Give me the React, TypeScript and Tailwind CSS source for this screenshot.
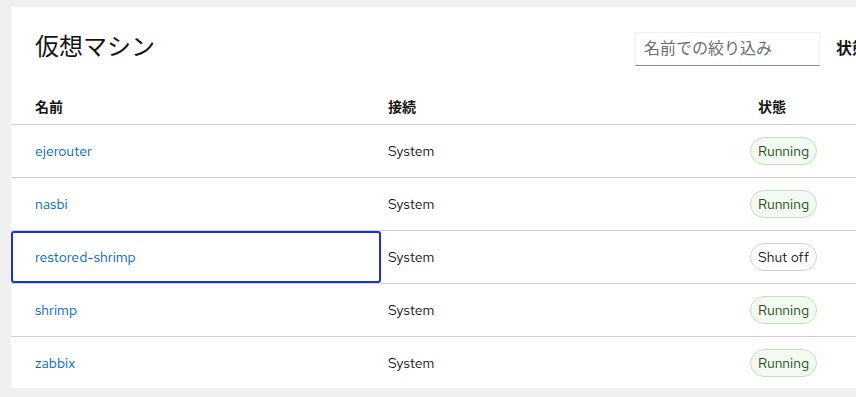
import React from 'react';

type Vm = { name: string; conn: string; state: 'Running' | 'Shut off'; focused?: boolean };

const vms: Vm[] = [
  { name: 'ejerouter', conn: 'System', state: 'Running' },
  { name: 'nasbi', conn: 'System', state: 'Running' },
  { name: 'restored-shrimp', conn: 'System', state: 'Shut off', focused: true },
  { name: 'shrimp', conn: 'System', state: 'Running' },
  { name: 'zabbix', conn: 'System', state: 'Running' },
];

const font = { fontFamily: '"Red Hat Text", Inter, "Noto Sans CJK JP", sans-serif' };

const StateBadge = ({ state }: { state: Vm['state'] }) =>
  state === 'Running' ? (
    <span className="inline-flex h-[28px] items-center rounded-full border border-[#bde5b8] bg-[#f3faf2] px-[7px] text-sm text-[#1e4f18]">
      Running
    </span>
  ) : (
    <span className="inline-flex h-[28px] items-center rounded-full border border-[#d2d2d2] bg-white px-[7px] text-sm text-[#151515]">
      Shut off
    </span>
  );

export default function App() {
  return (
    <div className="h-[397px] w-[856px] overflow-hidden bg-[#f0f0f0] pl-[11px] pt-[7px]" style={font}>
      <div className="w-[1000px] bg-white">
        <div className="flex h-[83px] items-center pl-6">
          <h1 className="w-[600px] pb-[3px] text-[24px] leading-none text-[#151515]">仮想マシン</h1>
          <div className="flex h-[34px] w-[185px] items-center border border-[#f0f0f0] border-b-[#8a8d90] pl-2 text-base text-[#6a6e73]">
            名前での絞り込み
          </div>
          <span className="ml-[16px] text-base font-bold text-[#151515]">状態</span>
        </div>
        <div className="flex h-[35px] items-start border-b border-[#d2d2d2] pt-[7px] text-sm font-bold text-[#151515]">
          <div className="w-[370px] pl-6">名前</div>
          <div className="w-[355px] pl-[7px]">接続</div>
          <div className="pl-[22px]">状態</div>
        </div>
        {vms.map((vm, i) => (
          <div
            key={vm.name}
            className={`flex items-center text-sm ${
              i < vms.length - 1 ? 'h-[53px] border-b border-[#d2d2d2]' : 'h-[51px]'
            }`}
          >
            <div
              className={`flex h-full w-[370px] items-center pl-6 ${
                vm.focused ? 'rounded-[3px] border-2 border-[#1733d6] pl-[22px]' : ''
              }`}
            >
              <a className="text-[#0066cc]">{vm.name}</a>
            </div>
            <div className="w-[355px] pl-[7px] text-[#151515]">{vm.conn}</div>
            <div className="pl-[14px]">
              <StateBadge state={vm.state} />
            </div>
          </div>
        ))}
      </div>
    </div>
  );
}
